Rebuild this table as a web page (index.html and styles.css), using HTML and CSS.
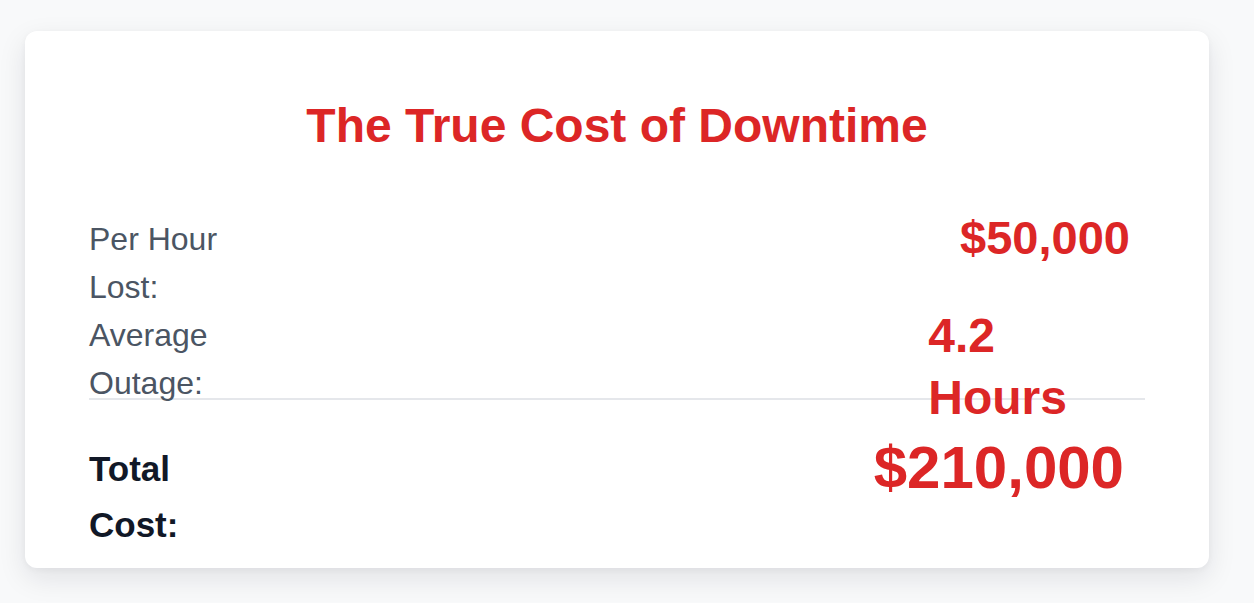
FILE: index.html
```html
<!DOCTYPE html>
<html lang="en">
<head>
<meta charset="utf-8">
<title>The True Cost of Downtime</title>
<link rel="stylesheet" href="styles.css">
</head>
<body>
  <section class="card">
    <h1 class="card__title">The True Cost of Downtime</h1>
    <div class="rows">
      <div class="row">
        <span class="row__label">Per Hour Lost:</span>
        <span class="row__value row__value--hour">$50,000</span>
      </div>
      <div class="row">
        <span class="row__label">Average Outage:</span>
        <span class="row__value row__value--outage">4.2 Hours</span>
      </div>
      <div class="row row--total">
        <span class="row__label row__label--total">Total Cost:</span>
        <span class="row__value row__value--total">$210,000</span>
      </div>
    </div>
  </section>
</body>
</html>
```

FILE: styles.css
```css
* {
  box-sizing: border-box;
}

html, body {
  margin: 0;
  padding: 0;
}

body {
  background: #f8f9fa;
  font-family: "Liberation Sans", Arial, sans-serif;
  padding: 31px 45px 0 25px;
  height: 603px;
  overflow: hidden;
}

.card {
  background: #ffffff;
  border-radius: 12px;
  box-shadow: 0 10px 28px rgba(17, 24, 39, 0.10), 0 2px 6px rgba(17, 24, 39, 0.04);
  padding: 64px 64px 15px;
}

.card__title {
  margin: 0;
  text-align: center;
  color: #dc2626;
  font-size: 48px;
  line-height: 62px;
  font-weight: 700;
}

.rows {
  margin-top: 58px;
}

.row {
  display: flex;
  justify-content: space-between;
  align-items: flex-start;
}

.row__label {
  width: 150px;
  color: #4b5563;
  font-size: 32px;
  line-height: 48px;
}

.row__value {
  color: #dc2626;
  font-weight: 700;
}

.row__value--hour {
  font-size: 47px;
  line-height: 46px;
  margin-right: 15px;
}

.row__value--outage {
  width: min-content;
  font-size: 48px;
  line-height: 62px;
  margin-top: -6px;
  margin-bottom: -22px;
  margin-right: 78px;
}

.row--total {
  margin-top: -9px;
  border-top: 2px solid #e5e7eb;
  padding-top: 38px;
}

.row__label--total {
  margin-top: 3px;
  color: #111827;
  font-size: 35px;
  line-height: 56px;
  font-weight: 700;
}

.row__value--total {
  font-size: 60px;
  line-height: 60px;
  margin-right: 21px;
}
```
